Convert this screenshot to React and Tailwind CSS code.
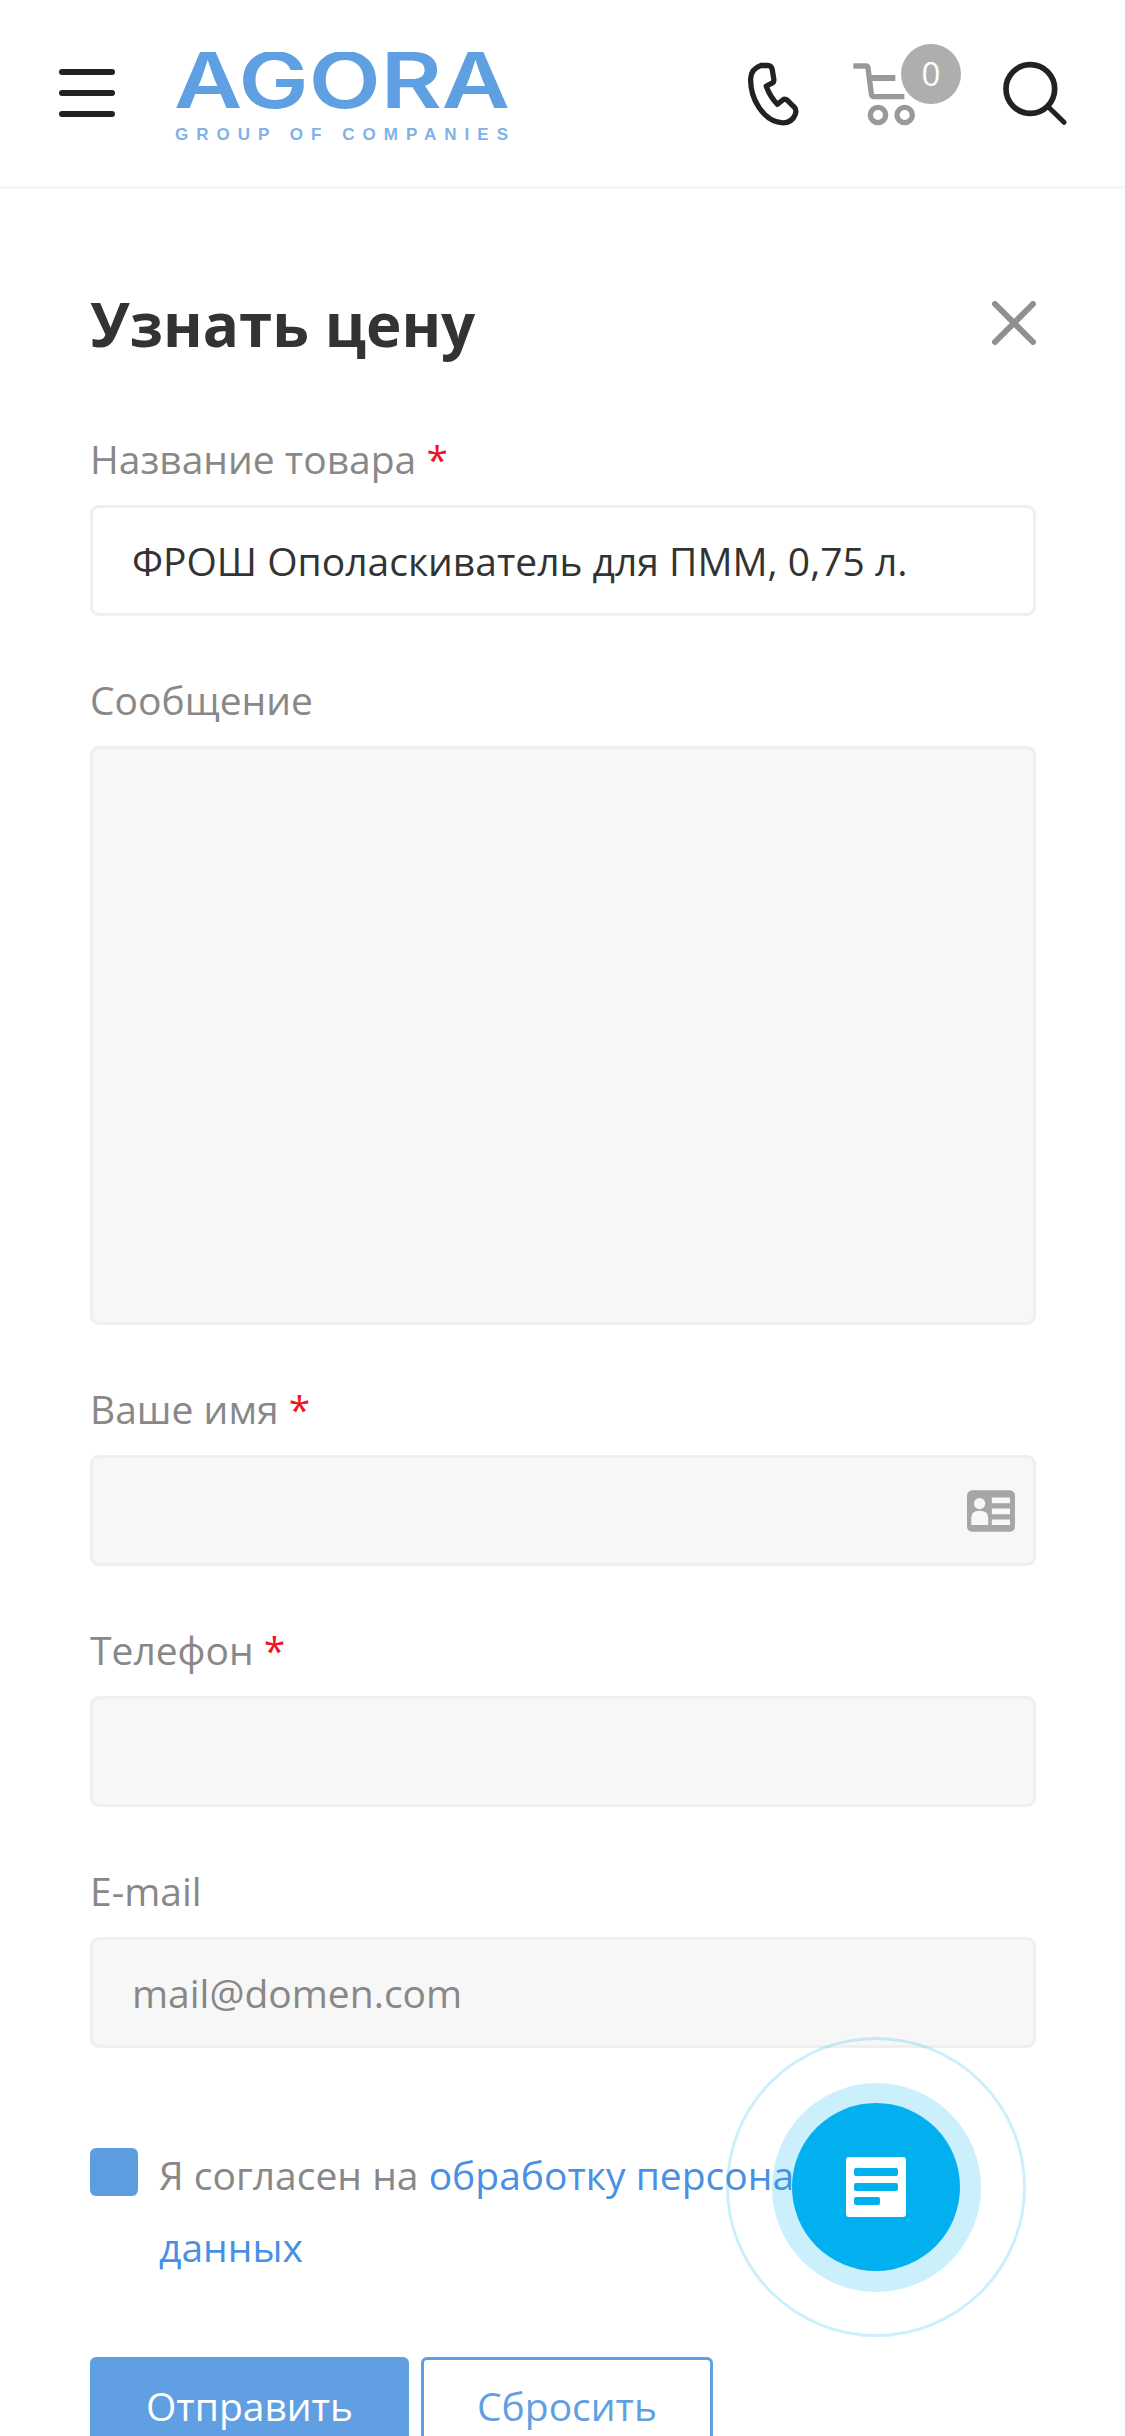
import React from "react";

const inputBase = "block w-full h-[111px] rounded-[9px] border-[3px] border-[#efefef] pl-[39px] pr-[38px] text-[39px] leading-[105px]";

const Field = ({ label, required, children }) => (
  <div className="mb-[60px]">
    <div className="h-[47px] mb-[23px] text-[39px] leading-[47px] text-[#888888]">
      {label}
      {required && <span className="text-[#f0141e]"> *</span>}
    </div>
    {children}
  </div>
);

const PhoneIcon = () => (
  <svg width="53" height="65" viewBox="140 185 160 195" className="block">
    <path
      d="M182 195 L205 195 Q214 196 216 206 L221 236 Q222 246 214 249 L198 257 Q210 290 232 312 L248 299 Q255 294 262 300 L284 322 Q290 330 286 342 Q276 368 248 368 Q205 366 175 320 Q150 280 151 235 Q152 205 182 195 Z"
      fill="none"
      stroke="#222222"
      strokeWidth="16"
      strokeLinejoin="round"
    />
  </svg>
);

const CartIcon = () => (
  <svg width="65" height="65" viewBox="455 185 195 195" className="block">
    <path d="M459 197 H497 Q502 197 503 203 L513 280 Q514 289 522 289 H612" fill="none" stroke="#999999" strokeWidth="16" />
    <path d="M510 233 H585" fill="none" stroke="#999999" strokeWidth="18" />
    <circle cx="533" cy="344" r="23" fill="none" stroke="#999999" strokeWidth="16" />
    <circle cx="613" cy="344" r="23" fill="none" stroke="#999999" strokeWidth="16" />
  </svg>
);

const SearchIcon = () => (
  <svg width="65" height="65" viewBox="905 183 195 195" className="block">
    <circle cx="990" cy="267" r="73" fill="none" stroke="#222222" strokeWidth="17" />
    <path d="M1045 322 L1091 367" fill="none" stroke="#222222" strokeWidth="15" strokeLinecap="round" />
  </svg>
);

const IdCardIcon = () => (
  <svg width="48" height="42" viewBox="200 150 145 125" className="block">
    <rect x="200" y="150" width="145" height="125" rx="16" fill="#a6a6a6" />
    <circle cx="238" cy="190" r="17" fill="#f7f7f7" />
    <path d="M213 255 V232 Q213 212 238 212 Q264 212 264 232 V255 Z" fill="#f7f7f7" />
    <path d="M275 172 H330 V189 H275 Z M275 205 H330 V222 H275 Z M275 238 H330 V255 H275 Z" fill="#f7f7f7" />
  </svg>
);

const Logo = () => (
  <svg width="338" height="92" viewBox="0 0 338 92" className="block">
    <text
      x="0"
      y="56"
      textLength="336"
      lengthAdjust="spacingAndGlyphs"
      fontFamily="Inter, sans-serif"
      fontWeight="600"
      fontSize="77"
      fill="#5fa0e2"
    >
      AGORA
    </text>
    <text
      x="1"
      y="88"
      textLength="333"
      lengthAdjust="spacing"
      fontFamily="'Liberation Sans', sans-serif"
      fontWeight="700"
      fontSize="17"
      fill="#7fb3e8"
    >
      GROUP OF COMPANIES
    </text>
  </svg>
);

export default function App() {
  return (
    <div className="relative h-[2436px] w-[1125px] overflow-hidden bg-white font-['Open_Sans',sans-serif] text-[#333333]">
      {/* Header */}
      <header className="flex h-[189px] items-start border-b-[3px] border-[#f5f5f5]">
        <div className="ml-[59px] mt-[69px] flex w-[56px] flex-col gap-[15px]">
          <span className="h-[6px] rounded-full bg-[#222222]" />
          <span className="h-[6px] rounded-full bg-[#222222]" />
          <span className="h-[6px] rounded-full bg-[#222222]" />
        </div>
        <div className="ml-[59px] mt-[52px]">
          <Logo />
        </div>
        <div className="ml-[235px] mt-[62px]">
          <PhoneIcon />
        </div>
        <div className="relative ml-[52px] mt-[62px]">
          <CartIcon />
          <span className="absolute left-[49px] top-[-18px] flex h-[60px] w-[60px] items-center justify-center rounded-full bg-[#aeaeae] text-[33px] text-white">
            0
          </span>
        </div>
        <div className="ml-[85px] mt-[61px]">
          <SearchIcon />
        </div>
      </header>

      {/* Form */}
      <main className="pl-[90px] pr-[89px]">
        <div className="flex h-[246px] items-start justify-between pt-[96px]">
          <h1 className="text-[60px] font-bold leading-[78px] text-[#333333]">Узнать цену</h1>
          <svg width="44" height="44" viewBox="0 0 44 44" className="mt-[16px] block">
            <path d="M3 3 L41 41 M41 3 L3 41" stroke="#909090" strokeWidth="6" strokeLinecap="round" />
          </svg>
        </div>

        <Field label="Название товара" required>
          <div className={`${inputBase} bg-white text-[#333333]`}>ФРОШ Ополаскиватель для ПММ, 0,75 л.</div>
        </Field>

        <Field label="Сообщение">
          <div className="h-[579px] rounded-[9px] border-[3px] border-[#efefef] bg-[#f7f7f7]" />
        </Field>

        <Field label="Ваше имя" required>
          <div className={`${inputBase} relative bg-[#f7f7f7]`}>
            <span className="absolute right-[18px] top-[32px]">
              <IdCardIcon />
            </span>
          </div>
        </Field>

        <Field label="Телефон" required>
          <div className={`${inputBase} bg-[#f7f7f7]`} />
        </Field>

        <Field label="E-mail">
          <div className={`${inputBase} bg-[#f7f7f7] text-[#888888]`}>mail@domen.com</div>
        </Field>

        {/* Agreement */}
        <div className="mt-[-60px] flex pt-[100px]">
          <span className="h-[48px] w-[48px] shrink-0 rounded-[6px] bg-[#5c9de2]" />
          <p className="ml-[21px] mt-[-9px] text-[39px] leading-[72px] text-[#888888]">
            Я согласен на <span className="text-[#4a90e2]">обработку персональных данных</span>
          </p>
        </div>

        {/* Buttons */}
        <div className="mt-[74px] flex gap-[12px]">
          <button className="h-[98px] w-[319px] rounded-[6px] bg-[#5f9fe2] text-[39px] text-white">Отправить</button>
          <button className="h-[98px] w-[292px] rounded-[6px] border-[3px] border-[#5f9fe2] bg-white text-[39px] text-[#5f9fe2]">
            Сбросить
          </button>
        </div>
      </main>

      {/* Floating form button */}
      <div className="absolute left-[726px] top-[2037px] flex h-[300px] w-[300px] items-center justify-center rounded-full border-[3px] border-[#02b0f0]/20">
        <div className="flex h-[209px] w-[209px] items-center justify-center rounded-full bg-[#02b0f0]/20">
          <div className="flex h-[168px] w-[168px] items-center justify-center rounded-full bg-[#02b0f0]">
            <svg width="60" height="60" viewBox="0 0 60 60" className="block">
              <rect width="60" height="60" rx="3" fill="#ffffff" />
              <rect x="8" y="11" width="44" height="8" rx="2" fill="#02b0f0" />
              <rect x="8" y="26" width="44" height="8" rx="2" fill="#02b0f0" />
              <rect x="8" y="40" width="26" height="8" rx="2" fill="#02b0f0" />
            </svg>
          </div>
        </div>
      </div>
    </div>
  );
}
